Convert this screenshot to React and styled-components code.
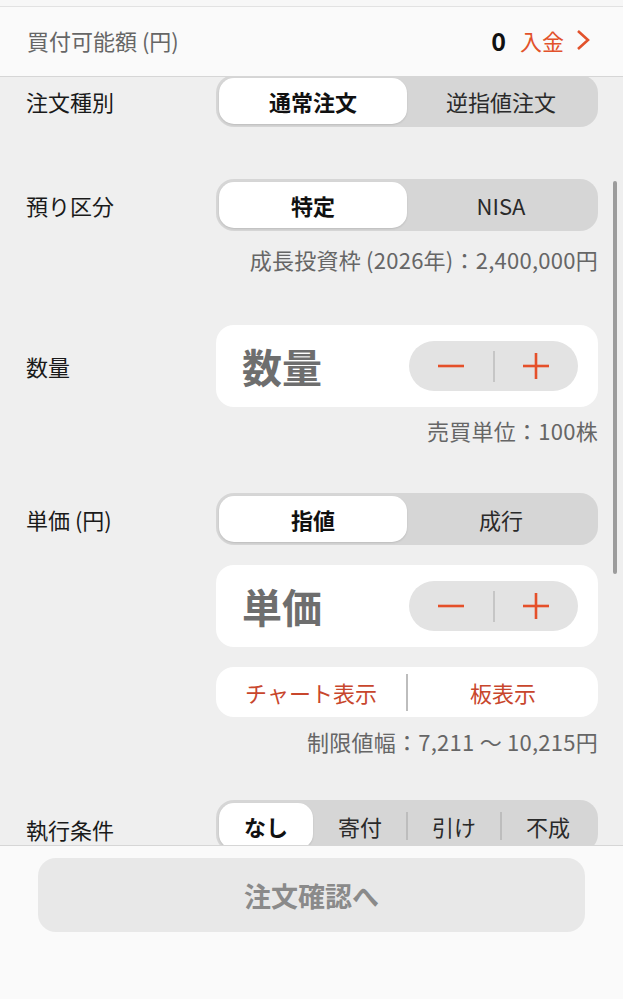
import React from 'react'
import styled, { createGlobalStyle } from 'styled-components'

const GlobalStyle = createGlobalStyle`
  html, body {
    margin: 0;
    padding: 0;
    background: #f6f6f6;
  }
  body {
    font-family: "Noto Sans CJK JP", "Noto Sans", sans-serif;
    color: #1a1a1a;
  }
`

const Screen = styled.div`
  width: 623px;
  height: 999px;
  display: flex;
  flex-direction: column;
  overflow: hidden;
`

const TopStrip = styled.div`
  height: 6px;
  background: #f7f7f7;
  border-bottom: 1px solid #e2e2e2;
  flex-shrink: 0;
`

const Header = styled.div`
  height: 70px;
  flex-shrink: 0;
  background: #fafafa;
  border-bottom: 1px solid #d6d6d6;
  display: flex;
  align-items: center;
  padding: 0 33px 3px 27px;
  box-sizing: border-box;
`

const HeaderLabel = styled.div`
  flex: 1;
  font-size: 22px;
  color: #666;
`

const Amount = styled.span`
  font-size: 25px;
  font-weight: 700;
  color: #111;
  margin-right: 14px;
`

const DepositLink = styled.span`
  display: flex;
  align-items: center;
  gap: 12px;
  font-size: 22px;
  color: #e2522b;
`

const ScrollArea = styled.div`
  position: relative;
  flex: 1;
  overflow: hidden;
  background: #efefef;
`

const Scrollbar = styled.div`
  position: absolute;
  right: 6px;
  top: 104px;
  width: 4px;
  height: 393px;
  border-radius: 2px;
  background: #9c9c9c;
`

const Section = styled.div`
  display: grid;
  grid-template-columns: 190px 382px;
  padding: 0 25px 0 26px;
  margin-top: ${(p) => p.$top}px;
`

const Label = styled.div`
  height: ${(p) => p.$h}px;
  display: flex;
  align-items: center;
  font-size: 22px;
  color: #1a1a1a;
`

const Field = styled.div`
  display: flex;
  flex-direction: column;
`

const Segmented = styled.div`
  height: 52px;
  box-sizing: border-box;
  padding: 3px;
  border-radius: 18px;
  background: #d6d6d6;
  display: flex;
  margin-top: ${(p) => p.$top || 0}px;
`

const Segment = styled.div`
  position: relative;
  flex: 1;
  display: flex;
  align-items: center;
  justify-content: center;
  font-size: 22px;
  border-radius: 15px;
  color: ${(p) => (p.$active ? '#111' : '#2a2a2a')};
  font-weight: ${(p) => (p.$active ? 700 : 400)};
  background: ${(p) => (p.$active ? '#fff' : 'transparent')};
  box-shadow: ${(p) => (p.$active ? '0 1px 2px rgba(0,0,0,0.12)' : 'none')};

  &::before {
    content: '';
    display: ${(p) => (p.$divider ? 'block' : 'none')};
    position: absolute;
    left: -1px;
    top: 9px;
    bottom: 9px;
    width: 2px;
    background: #bdbdbd;
  }
`

const Card = styled.div`
  height: 82px;
  box-sizing: border-box;
  border-radius: 18px;
  background: #fff;
  display: flex;
  align-items: center;
  padding: 0 20px 0 26px;
  margin-top: ${(p) => p.$top || 0}px;
`

const Placeholder = styled.div`
  flex: 1;
  font-size: 40px;
  font-weight: 700;
  color: #6e6e6e;
`

const Stepper = styled.div`
  width: 169px;
  height: 50px;
  border-radius: 25px;
  background: #e3e3e3;
  display: flex;
  align-items: center;
`

const StepButton = styled.div`
  flex: 1;
  height: 100%;
  display: flex;
  align-items: center;
  justify-content: center;
`

const StepDivider = styled.div`
  width: 2px;
  height: 31px;
  background: #c6c6c6;
`

const LinkBar = styled.div`
  height: 50px;
  margin-top: 20px;
  border-radius: 18px;
  background: #fff;
  display: flex;
  align-items: center;
`

const LinkItem = styled.div`
  flex: 1;
  text-align: center;
  font-size: 22px;
  color: #c8462c;
`

const LinkDivider = styled.div`
  width: 2px;
  height: 37px;
  background: #bdbdbd;
`

const Note = styled.div`
  margin-top: ${(p) => p.$top}px;
  line-height: 28px;
  font-size: 22px;
  letter-spacing: 0.25px;
  color: #666;
  text-align: right;
`

const Footer = styled.div`
  height: 154px;
  flex-shrink: 0;
  box-sizing: border-box;
  background: #fafafa;
  border-top: 1px solid #d6d6d6;
  padding: 12px 38px 0;
`

const ConfirmButton = styled.div`
  height: 74px;
  border-radius: 18px;
  background: #e8e8e8;
  display: flex;
  align-items: center;
  justify-content: center;
  font-size: 27px;
  font-weight: 700;
  color: #8a8a8a;
`

const Minus = () => (
  <svg width="28" height="28" viewBox="0 0 28 28">
    <line x1="1" y1="14" x2="27" y2="14" stroke="#e5502a" strokeWidth="2.6" />
  </svg>
)

const Plus = () => (
  <svg width="28" height="28" viewBox="0 0 28 28">
    <line x1="1" y1="14" x2="27" y2="14" stroke="#e5502a" strokeWidth="2.6" />
    <line x1="14" y1="1" x2="14" y2="27" stroke="#e5502a" strokeWidth="2.6" />
  </svg>
)

const Chevron = () => (
  <svg width="14" height="22" viewBox="0 0 14 22">
    <polyline points="2,2 12,11 2,20" fill="none" stroke="#e2522b" strokeWidth="2.6" />
  </svg>
)

const SegmentGroup = ({ items, active, top }) => (
  <Segmented $top={top}>
    {items.map((item, i) => (
      <Segment
        key={item}
        $active={i === active}
        $divider={i > 0 && i !== active && i - 1 !== active}
      >
        {item}
      </Segment>
    ))}
  </Segmented>
)

const StepInput = ({ placeholder, top }) => (
  <Card $top={top}>
    <Placeholder>{placeholder}</Placeholder>
    <Stepper>
      <StepButton>
        <Minus />
      </StepButton>
      <StepDivider />
      <StepButton>
        <Plus />
      </StepButton>
    </Stepper>
  </Card>
)

export default function App() {
  return (
    <Screen>
      <GlobalStyle />
      <TopStrip />
      <Header>
        <HeaderLabel>買付可能額 (円)</HeaderLabel>
        <Amount>0</Amount>
        <DepositLink>
          入金 <Chevron />
        </DepositLink>
      </Header>
      <ScrollArea>
        <Section $top={-2}>
          <Label $h={52}>注文種別</Label>
          <SegmentGroup items={['通常注文', '逆指値注文']} active={0} />
        </Section>

        <Section $top={52}>
          <Label $h={52}>預り区分</Label>
          <Field>
            <SegmentGroup items={['特定', 'NISA']} active={0} />
            <Note $top={14}>成長投資枠 (2026年)：2,400,000円</Note>
          </Field>
        </Section>

        <Section $top={52}>
          <Label $h={82}>数量</Label>
          <Field>
            <StepInput placeholder="数量" />
            <Note $top={9}>売買単位：100株</Note>
          </Field>
        </Section>

        <Section $top={49}>
          <Label $h={52}>単価 (円)</Label>
          <Field>
            <SegmentGroup items={['指値', '成行']} active={0} />
            <StepInput placeholder="単価" top={20} />
            <LinkBar>
              <LinkItem>チャート表示</LinkItem>
              <LinkDivider />
              <LinkItem>板表示</LinkItem>
            </LinkBar>
            <Note $top={10}>制限値幅：7,211 〜 10,215円</Note>
          </Field>
        </Section>

        <Section $top={45}>
          <Label $h={58}>執行条件</Label>
          <SegmentGroup items={['なし', '寄付', '引け', '不成']} active={0} />
        </Section>

        <Scrollbar />
      </ScrollArea>
      <Footer>
        <ConfirmButton>注文確認へ</ConfirmButton>
      </Footer>
    </Screen>
  )
}
